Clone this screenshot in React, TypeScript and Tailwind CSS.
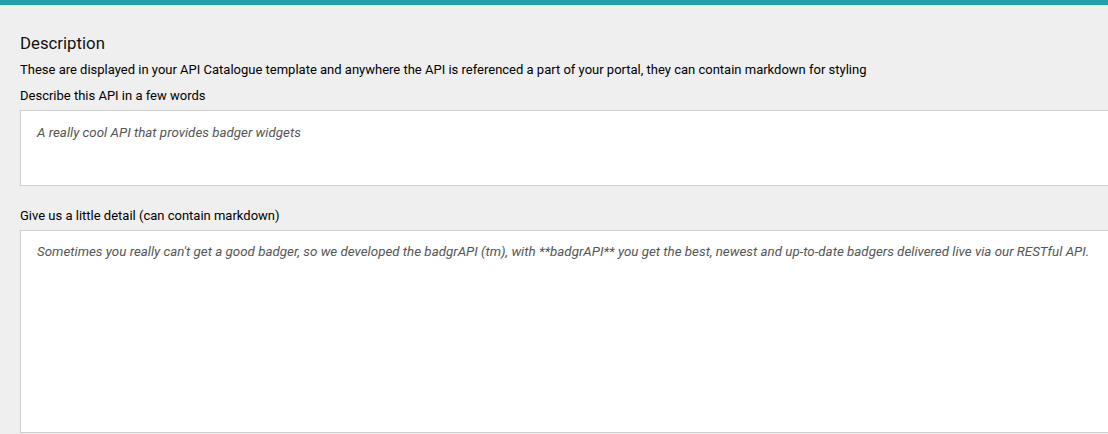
export default function App() {
  return (
    <div className="w-[1108px] h-[434px] overflow-hidden bg-[#efefef] font-['Roboto',sans-serif] text-black">
      {/* Top accent bar */}
      <div className="h-[5px] bg-[#21a0aa]" />

      <div className="pl-5 pt-[28px]">
        <h2 className="text-[16.8px] leading-5 text-[#111]">Description</h2>
        <p className="mt-[9px] text-[13px] leading-4">
          These are displayed in your API Catalogue template and anywhere the API is referenced a part of your portal, they can contain markdown for styling
        </p>

        <label className="block mt-[10px] text-[13px] leading-4">Describe this API in a few words</label>
        <div className="mt-[6px] w-[1100px] h-[76px] bg-white border border-[#cfcfcf] px-4 pt-[9px]">
          <span className="italic text-[13.35px] text-[#555]">A really cool API that provides badger widgets</span>
        </div>

        <label className="block mt-[22px] text-[13px] leading-4">Give us a little detail (can contain markdown)</label>
        <div className="mt-[6px] w-[1100px] h-[203px] bg-white border border-[#cfcfcf] px-4 pt-[8px]">
          <span className="italic text-[13.35px] text-[#555] whitespace-nowrap">
            Sometimes you really can't get a good badger, so we developed the badgrAPI (tm), with **badgrAPI** you get the best, newest and up-to-date badgers delivered live via our RESTful API.
          </span>
        </div>
      </div>
    </div>
  );
}
